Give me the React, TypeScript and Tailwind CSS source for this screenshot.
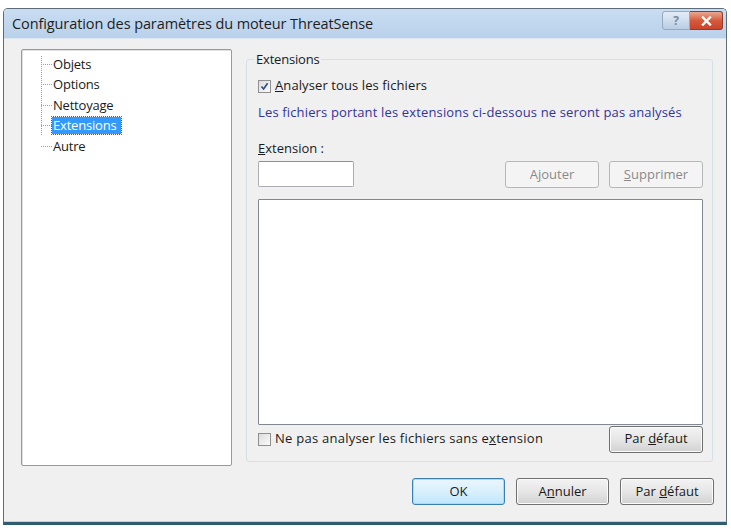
import React from "react";

const font = { fontFamily: '"Open Sans", "Noto Sans", sans-serif' };

function Check({ checked }: { checked?: boolean }) {
  return (
    <span className="w-[13px] h-[13px] shrink-0 border border-[#8f8f8f] bg-gradient-to-br from-[#dcdcdc] to-[#fbfbfb] flex items-center justify-center">
      {checked && (
        <svg width="9" height="9" viewBox="0 0 9 9">
          <path d="M1.5 4.5 L3.6 7 L7.6 1.3" fill="none" stroke="#2a4a8a" strokeWidth="1.6" />
        </svg>
      )}
    </span>
  );
}

function Btn({
  children,
  disabled,
  primary,
  w = "w-[94px]",
}: {
  children: React.ReactNode;
  disabled?: boolean;
  primary?: boolean;
  w?: string;
}) {
  if (disabled) {
    return (
      <div className={`${w} h-[27px] rounded-[3px] border border-[#b5b8bb] bg-[#f4f4f4] text-[#8a8a8a] text-[13px] flex items-center justify-center`}>
        <span>{children}</span>
      </div>
    );
  }
  return (
    <div
      className={`${w} h-[27px] rounded-[3px] border ${
        primary ? "border-[#3c7fb1] shadow-[inset_0_0_0_1px_#9fe0f7]" : "border-[#707070] shadow-[inset_0_0_0_1px_#fbfbfb]"
      } bg-gradient-to-b ${
        primary ? "from-[#eaf6fd] via-[#d9f0fc] to-[#bee6fd]" : "from-[#f3f3f3] via-[#e6e6e6] to-[#d2d2d2]"
      } text-[#1a1a1a] text-[13px] flex items-center justify-center`}
    >
      <span>{children}</span>
    </div>
  );
}

const items = ["Objets", "Options", "Nettoyage", "Extensions", "Autre"];

export default function App() {
  return (
    <div className="w-[731px] h-[529px] bg-white pt-[8px] pl-[3px]" style={font}>
      <div className="w-[724px] h-[517px] border border-[#5d6b7a] border-b-[3px] border-b-[#2f5d70] rounded-t-[5px] flex flex-col overflow-hidden">
        {/* Title bar */}
        <div className="h-[30px] bg-gradient-to-b from-[#c9ddf2] to-[#b9d1eb] flex items-center pl-[8px] pr-[3px] border-b border-[#dbe6f2]">
          <span className="text-[14.5px] text-[#1e1e1e] flex-1 tracking-[-0.1px]">
            Configuration des paramètres du moteur ThreatSense
          </span>
          <div className="flex h-[19px] mb-[6px]">
            <div className="w-[28px] h-[19px] rounded-l-[3px] border border-[#95a9c0] bg-gradient-to-b from-[#e4edf7] to-[#b9cde4] flex items-center justify-center text-[12px] font-bold text-[#7a8ba0]">
              ?
            </div>
            <div className="w-[33px] h-[19px] rounded-r-[3px] border border-l-0 border-[#8a3e32] bg-gradient-to-b from-[#e9a793] via-[#d65a3c] to-[#c8452b] flex items-center justify-center">
              <svg width="11" height="10" viewBox="0 0 11 10">
                <path d="M2 1.5 L9 8.5 M9 1.5 L2 8.5" stroke="#ffffff" strokeWidth="2.4" strokeLinecap="square" />
              </svg>
            </div>
          </div>
        </div>

        {/* Body */}
        <div className="flex-1 bg-[#f0f0f0] flex flex-col pl-[17px] pr-[12px] pt-[10px] border-b border-[#a6dced]">
          <div className="flex gap-[14px]">
            {/* Tree */}
            <div className="w-[211px] h-[417px] bg-white border border-[#9a9a9a] rounded-[2px] shadow-[inset_1px_1px_0_#e0e0e0] text-[13px] text-[#1a1a1a] pt-[4px] pl-[19px] tracking-[-0.2px]">
              <div className="relative">
                <div className="absolute left-0 top-[2px] h-[79px] border-l border-dotted border-[#a0a0a0]" />
                {items.map((it) => (
                  <div key={it} className="h-[20.5px] flex items-center">
                    <span className="w-[11px] border-t border-dotted border-[#a0a0a0]" />
                    <span
                      className={
                        it === "Extensions"
                          ? "bg-[#3399ff] text-white pl-[1px] pr-[5px] leading-[17px] outline outline-1 outline-dotted outline-[#7a5a2a]"
                          : "px-[1px] leading-[17px]"
                      }
                    >
                      {it}
                    </span>
                  </div>
                ))}
              </div>
            </div>

            {/* Group */}
            <fieldset className="w-[467px] h-[410px] mt-[3px] border border-[#d5dfe5] rounded-[3px] pl-[11px] pr-[9px] flex flex-col text-[13px] text-[#1a1a1a]">
              <legend className="-ml-[4px] px-[2px] leading-[14px] h-[14px] tracking-[-0.2px]">Extensions</legend>
              <div className="flex items-center gap-[4px] h-[14px] mt-[13px]">
                <Check checked />
                <span className="tracking-[0.1px]">
                  <u>A</u>nalyser tous les fichiers
                </span>
              </div>
              <div className="h-[14px] mt-[12px] leading-[14px] text-[#33339e] tracking-[0.15px]">
                Les fichiers portant les extensions ci-dessous ne seront pas analysés
              </div>
              <div className="h-[14px] mt-[22px] leading-[14px]">
                <u>E</u>xtension :
              </div>
              <div className="flex items-start h-[27px] mt-[6px]">
                <div className="w-[96px] h-[26px] bg-white border border-[#abadb3] border-t-[#8e9297] rounded-[2px]" />
                <div className="flex-1" />
                <Btn disabled>
                  A<u>j</u>outer
                </Btn>
                <div className="w-[10px]" />
                <Btn disabled>
                  <u>S</u>upprimer
                </Btn>
              </div>
              <div className="h-[226px] mt-[11px] bg-white border border-[#828790] rounded-[1px]" />
              <div className="flex items-center h-[26px] mt-[1px]">
                <Check />
                <span className="ml-[4px] flex-1 tracking-[0.25px]">
                  Ne pas analyser les fichiers sans e<u>x</u>tension
                </span>
                <Btn w="w-[94px] h-[26px]">
                  Par <u>d</u>éfaut
                </Btn>
              </div>
            </fieldset>
          </div>

          {/* Bottom buttons */}
          <div className="flex justify-end gap-[11px] mt-[12px]">
            <Btn primary w="w-[93px]">
              OK
            </Btn>
            <Btn w="w-[93px]">
              A<u>n</u>nuler
            </Btn>
            <Btn w="w-[94px]">
              Par <u>d</u>éfaut
            </Btn>
          </div>
        </div>
      </div>
    </div>
  );
}
